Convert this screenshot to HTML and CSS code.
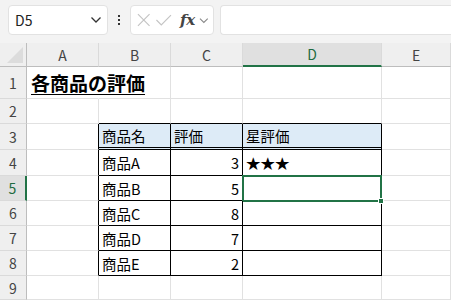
FILE: index.html
```html
<!DOCTYPE html>
<html lang="ja">
<head>
    <meta charset="UTF-8">
    <title>各商品の評価</title>
    <link rel="stylesheet" href="styles.css">
</head>
<body>

    <div class="topbar">
        <div class="namebox">
            <span>D5</span>
            <svg width="12" height="8" viewBox="0 0 12 8"><path d="M1.5 1.5 L6 6 L10.5 1.5" fill="none" stroke="#333" stroke-width="1.3"/></svg>
        </div>
        <div class="dots"><i></i><i></i><i></i></div>
        <div class="fxbox">
            <svg width="16" height="16" viewBox="0 0 16 16"><path d="M2 2 L14 14 M14 2 L2 14" stroke="#c4c4c4" stroke-width="1.2"/></svg>
            <svg width="18" height="16" viewBox="0 0 18 16"><path d="M1.5 8 L6.5 13 L16.5 3" fill="none" stroke="#c4c4c4" stroke-width="1.2"/></svg>
            <span class="fx">fx</span>
            <svg width="10" height="7" viewBox="0 0 10 7"><path d="M1 1.5 L5 5.5 L9 1.5" fill="none" stroke="#888" stroke-width="1.1"/></svg>
        </div>
        <div class="formula"></div>
    </div>

    <div class="sheet">
        <div class="corner"></div>
        <div class="colhead">A</div>
        <div class="colhead">B</div>
        <div class="colhead">C</div>
        <div class="colhead active">D</div>
        <div class="colhead">E</div>

        <div class="rowhead">1</div>
        <div class="cell title">各商品の評価</div>
        <div class="cell"></div>
        <div class="cell"></div>
        <div class="cell"></div>
        <div class="cell"></div>

        <div class="rowhead">2</div>
        <div class="cell"></div>
        <div class="cell above"></div>
        <div class="cell above"></div>
        <div class="cell above"></div>
        <div class="cell"></div>

        <div class="rowhead">3</div>
        <div class="cell left"></div>
        <div class="cell tb th">商品名</div>
        <div class="cell tb th">評価</div>
        <div class="cell tb th">星評価</div>
        <div class="cell"></div>

        <div class="rowhead">4</div>
        <div class="cell left"></div>
        <div class="cell tb">商品A</div>
        <div class="cell tb num">3</div>
        <div class="cell tb stars">★★★</div>
        <div class="cell"></div>

        <div class="rowhead active">5</div>
        <div class="cell left"></div>
        <div class="cell tb">商品B</div>
        <div class="cell tb num">5</div>
        <div class="cell tb selected"><span class="handle"></span></div>
        <div class="cell"></div>

        <div class="rowhead">6</div>
        <div class="cell left"></div>
        <div class="cell tb">商品C</div>
        <div class="cell tb num">8</div>
        <div class="cell tb"></div>
        <div class="cell"></div>

        <div class="rowhead">7</div>
        <div class="cell left"></div>
        <div class="cell tb">商品D</div>
        <div class="cell tb num">7</div>
        <div class="cell tb"></div>
        <div class="cell"></div>

        <div class="rowhead">8</div>
        <div class="cell left"></div>
        <div class="cell tb">商品E</div>
        <div class="cell tb num">2</div>
        <div class="cell tb"></div>
        <div class="cell"></div>

        <div class="rowhead">9</div>
        <div class="cell"></div>
        <div class="cell"></div>
        <div class="cell"></div>
        <div class="cell"></div>
        <div class="cell"></div>
    </div>

</body>
</html>
```

FILE: styles.css
```css
* {
    box-sizing: border-box;
}
body {
    margin: 0;
    width: 451px;
    height: 300px;
    overflow: hidden;
    background: #fff;
    font-family: "Noto Sans CJK JP", "Noto Sans", sans-serif;
    color: #000;
}
.topbar {
    height: 43px;
    background: #f3f3f3;
    display: flex;
    align-items: flex-start;
    padding: 5px 0 0 8px;
}
.namebox {
    width: 100px;
    height: 30px;
    background: #fff;
    border: 1px solid #e2e2e2;
    border-radius: 4px;
    display: flex;
    align-items: center;
    justify-content: space-between;
    padding: 0 5px 0 6px;
    font-size: 14px;
    color: #222;
}
.dots {
    width: 22px;
    height: 30px;
    display: flex;
    flex-direction: column;
    align-items: center;
    justify-content: center;
    gap: 2px;
}
.dots i {
    width: 2px;
    height: 2px;
    background: #333;
}
.fxbox {
    width: 84px;
    height: 30px;
    background: #fff;
    border: 1px solid #e2e2e2;
    border-radius: 4px;
    display: flex;
    align-items: center;
    padding: 0 4px 0 5px;
    gap: 4px;
}
.fx {
    font-family: "DejaVu Serif", "Liberation Serif", serif;
    font-style: italic;
    font-weight: bold;
    font-size: 15px;
    color: #444;
    margin-left: 3px;
}
.formula {
    flex: 1;
    height: 30px;
    margin-left: 6px;
    background: #fff;
    border: 1px solid #e2e2e2;
    border-right: none;
    border-radius: 4px 0 0 4px;
}
.sheet {
    display: grid;
    grid-template-columns: 27px 72px 72px 72px 139px 1fr;
    grid-template-rows: 24px 32px 25px 26px 26px 25px 25px 25px 25px 24px;
}
.corner {
    background: #efefef;
    border-right: 1px solid #bdbdbd;
    border-bottom: 1px solid #bdbdbd;
    position: relative;
}
.corner::after {
    content: "";
    position: absolute;
    right: 3px;
    bottom: 3px;
    width: 0;
    height: 0;
    border-left: 16px solid transparent;
    border-bottom: 16px solid #dcdcdc;
}
.colhead {
    background: #efefef;
    border-right: 1px solid #dadada;
    border-bottom: 1px solid #bdbdbd;
    font-size: 14px;
    color: #444;
    display: flex;
    align-items: center;
    justify-content: center;
}
.colhead.active {
    background: #e0e0e0;
    color: #1e6b41;
    border-bottom: 2px solid #217346;
}
.rowhead {
    background: #efefef;
    border-right: 1px solid #bdbdbd;
    border-bottom: 1px solid #dadada;
    font-size: 14px;
    color: #444;
    display: flex;
    align-items: center;
    justify-content: center;
}
.rowhead.active {
    background: #e0e0e0;
    color: #1e6b41;
    border-right: 2px solid #217346;
}
.cell {
    border-right: 1px solid #e1e1e1;
    border-bottom: 1px solid #e1e1e1;
    font-size: 14.5px;
    display: flex;
    align-items: center;
    padding: 0 3px;
    white-space: nowrap;
    position: relative;
}
.title {
    overflow: visible;
    font-size: 19px;
    font-weight: bold;
    text-decoration: underline;
    text-underline-offset: 3px;
    padding-left: 4px;
    border-right-color: transparent;
    z-index: 1;
}
.above {
    border-bottom-color: #000;
}
.left {
    border-right-color: #000;
}
.tb {
    border-right-color: #000;
    border-bottom-color: #000;
}
.th {
    background: #ddebf7;
    border-bottom: 3px double #000;
}
.num {
    justify-content: flex-end;
}
.stars {
    padding-left: 3px;
}
.selected::after {
    content: "";
    position: absolute;
    left: -1px;
    top: -1px;
    right: -1px;
    bottom: -2px;
    border: 2px solid #217346;
}
.handle {
    position: absolute;
    right: -3px;
    bottom: -4px;
    width: 6px;
    height: 6px;
    background: #217346;
    border: 1px solid #fff;
    z-index: 2;
}
```
